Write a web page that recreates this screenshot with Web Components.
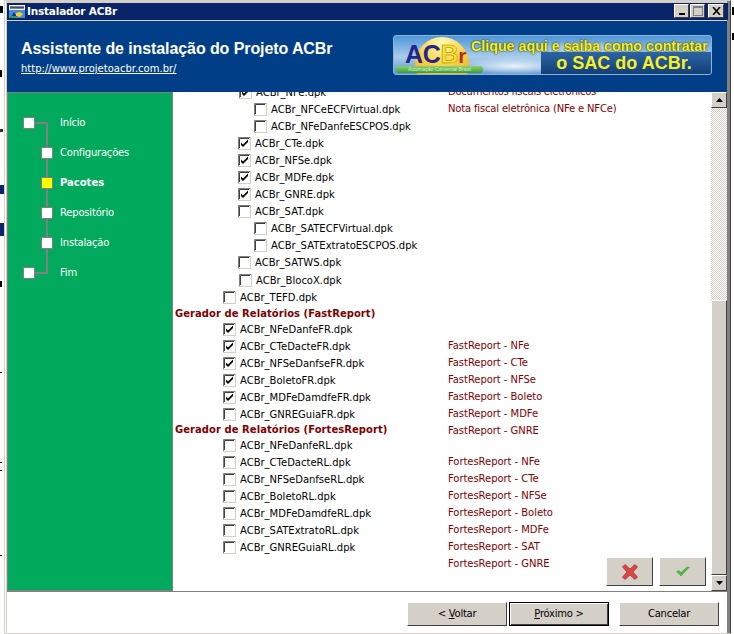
<!DOCTYPE html>
<html>
<head>
<meta charset="utf-8">
<title>Instalador ACBr</title>
<style>
  html, body { margin: 0; padding: 0; background: #fff; overflow: hidden; }
  body { width: 734px; height: 634px; font: 11px "DejaVu Sans", sans-serif; }
</style>
</head>
<body>
<wizard-window>
  <title-bar slot="title">Instalador ACBr</title-bar>
  <wizard-banner slot="banner"></wizard-banner>
  <step-list slot="steps"></step-list>
  <package-list slot="list"></package-list>
  <footer-bar slot="footer"></footer-bar>
</wizard-window>

<script>
const FONT = '"DejaVu Sans", "Liberation Sans", sans-serif'
const RAISED = 'background: #d4d0c8; border: 1px solid; border-color: #fff #404040 #404040 #fff;'

customElements.define('wizard-window', class extends HTMLElement {
  constructor () {
    super()
    // bits of the desktop that show around the window
    const marks = [
      [0, 6, 3, 7, '#000'], [0, 70, 2, 7, '#000'], [0, 129, 3, 3, '#333'], [0, 185, 4, 9, '#0a246a'],
      [0, 223, 4, 13, '#0a246a'], [0, 281, 2, 6, '#000'], [0, 372, 2, 1, '#000'], [0, 462, 2, 1, '#000'],
      [0, 470, 2, 1, '#000'], [0, 555, 2, 1, '#000'], [732, 7, 2, 8, '#000'], [732, 33, 2, 7, '#000']
    ].map(([x, y, w, h, c]) => `<i style="left:${x}px;top:${y}px;width:${w}px;height:${h}px;background:${c}"></i>`).join('')
    this.attachShadow({ mode: 'open' }).innerHTML = `
      <style>
        :host { display: block; width: 734px; height: 634px; background: #fff; position: relative; font-family: ${FONT}; }
        i { position: absolute; }
        #frame { box-sizing: border-box; margin: 0 3px 0 4px; height: 634px; background: #d4d0c8; border: 1px solid #d4d0c8; border-right-color: #404040; padding: 2px 3px 0 2px; display: flex; flex-direction: column; box-shadow: inset 1px 0 0 #fff, inset -3px 0 0 #808080; }
        #client { flex: 1; display: flex; flex-direction: column; background: #fff; min-height: 0; }
        #middle { height: 499px; flex: none; display: flex; min-height: 0; }
      </style>
      ${marks}
      <div id="frame">
        <slot name="title"></slot>
        <div id="client">
          <slot name="banner"></slot>
          <div id="middle">
            <slot name="steps"></slot>
            <slot name="list"></slot>
          </div>
          <slot name="footer"></slot>
        </div>
      </div>`
  }
})

customElements.define('title-bar', class extends HTMLElement {
  constructor () {
    super()
    this.attachShadow({ mode: 'open' }).innerHTML = `
      <style>
        :host { display: flex; align-items: center; height: 17px; margin: 0 -1px 1px 0; background: #0a246a; color: #fff; font: bold 10.5px/17px ${FONT}; letter-spacing: -.2px; }
        svg { margin: 0 2px; flex: none; }
        #name { flex: 1; }
        .btn { width: 15px; height: 14px; box-sizing: border-box; ${RAISED} display: flex; align-items: center; justify-content: center; }
        #buttons { display: flex; gap: 1px; margin: -2px 4px 0 0; }
        #buttons .btn:last-child { margin-left: 2px; width: 16px; }
      </style>
      <svg width="16" height="13" viewBox="0 0 16 13">
        <rect width="16" height="13" fill="#f4f4f4"/>
        <path d="M1 2h14M1 3h14" stroke="#101040"/>
        <rect x="0" y="5" width="16" height="8" fill="#3f8fd8"/>
        <path d="M2 12l3-5 3 5z" fill="#20308c"/>
        <path d="M7 8l4-1 3 2-3 3-4-1z" fill="#f0d020"/>
        <rect x="0" y="11" width="7" height="2" fill="#30a050"/>
      </svg>
      <span id="name"><slot></slot></span>
      <div id="buttons">
        <div class="btn"><svg style="margin:0" width="8" height="8"><rect x="1" y="6" width="6" height="2" fill="#000"/></svg></div>
        <div class="btn"><svg style="margin:0" width="10" height="10"><rect x=".5" y=".5" width="9" height="9" fill="none" stroke="#808080"/><rect width="10" height="2" fill="#808080"/></svg></div>
        <div class="btn"><svg style="margin:0" width="9" height="8" viewBox="0 0 9 8"><path d="M1 0l7 8M8 0l-7 8" stroke="#000" stroke-width="1.6" fill="none"/></svg></div>
      </div>`
  }
})

customElements.define('wizard-banner', class extends HTMLElement {
  constructor () {
    super()
    this.attachShadow({ mode: 'open' }).innerHTML = `
      <style>
        :host { display: flex; height: 71px; background: #003f87; color: #fff; box-sizing: border-box; padding: 14px 15px 0 14px; justify-content: space-between; flex: none; }
        #head { padding-top: 4px; }
        h1 { margin: 0; font: bold 16px/20px "Liberation Sans", sans-serif; letter-spacing: -.09px; }
        a { display: block; margin-top: 3px; color: #fff; font: 10px/13px ${FONT}; }
        #ad { position: relative; width: 319px; height: 40px; box-sizing: border-box; border-radius: 3px; overflow: hidden; border: 1px solid #8fb4d8;
          background: radial-gradient(ellipse 60px 9px at 120px 30px, #e8f2fa, transparent), radial-gradient(ellipse 50px 7px at 190px 12px, #cfe3f4, transparent), linear-gradient(#4f96d8, #a9cdea 55%, #5d94cc); }
        #sun { position: absolute; left: 21px; top: 1px; width: 54px; height: 54px; border-radius: 50%; background: radial-gradient(circle at 50% 10%, #fff8b8, #f8d040 45%, #e89020); }
        #logo { position: absolute; left: 11px; top: 6px; font: bold 25px/24px "Liberation Sans", sans-serif; color: #24248c; letter-spacing: -.3px; }
        #logo b { color: #f6e030; -webkit-text-stroke: .5px #a08000; }
        #logo span { color: #b03018; font-size: 21px; }
        #strip { position: absolute; left: 2px; top: 30px; width: 87px; height: 7px; border-radius: 3px; background: linear-gradient(#8cd070, #3c9c38); color: #d8f0d0; font: 5px/7px "Liberation Sans", sans-serif; text-align: center; }
        #l1 { position: absolute; left: 77px; top: 3px; font: bold 14.25px/14px "Liberation Sans", sans-serif; color: #f8f020; white-space: nowrap; text-shadow: 0 0 1px #2a3a10, 0 0 2px #2a3a10; }
        #panel { position: absolute; right: 0; bottom: 0; width: 170px; height: 22px; background: linear-gradient(#2c64a4, #123f78); }
        #l2 { font: bold 18px/23px "Liberation Sans", sans-serif; color: #f8f020; text-align: center; padding-right: 4px; }
      </style>
      <div id="head">
        <h1>Assistente de instalação do Projeto ACBr</h1>
        <a href="#">http://www.projetoacbr.com.br/</a>
      </div>
      <div id="ad">
        <div id="sun"></div>
        <div id="logo">AC<b>B</b><span>r</span></div>
        <div id="strip">Automação Comercial Brasil</div>
        <div id="l1">Clique aqui e saiba como contratar</div>
        <div id="panel"><div id="l2">o SAC do ACBr.</div></div>
      </div>`
  }
})

customElements.define('step-list', class extends HTMLElement {
  constructor () {
    super()
    const steps = [
      ['Início', 0], ['Configurações', 1], ['Pacotes', 1, true],
      ['Repositório', 1], ['Instalação', 1], ['Fim', 0]
    ]
    const rows = steps.map(([name, inner, current]) => `
      <div class="row">
        <i class="box ${inner ? 'in' : ''} ${current ? 'cur' : ''}"></i>
        <span class="${current ? 'cur' : ''}">${name}</span>
      </div>`).join('')
    this.attachShadow({ mode: 'open' }).innerHTML = `
      <style>
        :host { display: block; flex: none; width: 166px; box-sizing: border-box; background: #00a95c; border: 1px solid #808080; position: relative; color: #fff; font: 10px/30px ${FONT}; letter-spacing: -.2px; padding-top: 15px; }
        #line { position: absolute; left: 27px; top: 29px; width: 13px; height: 152px; box-sizing: border-box; border: 2px solid #808080; border-left: 0; }
        .row { height: 30px; position: relative; padding-left: 52px; }
        .box { position: absolute; left: 15px; top: 9px; background: #fff; border: 1px solid #808080; width: 10px; height: 10px; }
        .box.in { left: 33px; }
        .box.cur { background: #ffff00; }
        span.cur { font-weight: bold; letter-spacing: 0; }
      </style>
      <div id="line"></div>
      ${rows}`
  }
})

customElements.define('check-row', class extends HTMLElement {
  constructor () {
    super()
    const x = this.getAttribute('x') || 0
    const on = this.hasAttribute('on')
    this.attachShadow({ mode: 'open' }).innerHTML = `
      <style>
        :host { display: flex; align-items: center; height: 17px; white-space: nowrap; font: 10px/17px ${FONT}; color: #000; padding-left: ${x}px; }
        svg { flex: none; margin-right: 4px; }
      </style>
      <svg width="13" height="13" viewBox="0 0 13 13">
        <rect x=".5" y=".5" width="12" height="12" fill="#fff" stroke="#d4d0c8"/>
        <path d="M.5 12V.5H12" fill="none" stroke="#808080"/>
        <path d="M1.5 11V1.500H11" fill="none" stroke="#404040"/>
        ${on ? '<path d="M3 5.500l2 2 5-5v2.500l-5 5-2-2z" fill="#000"/>' : ''}
      </svg>
      <slot></slot>`
  }
})

customElements.define('section-head', class extends HTMLElement {
  constructor () {
    super()
    this.attachShadow({ mode: 'open' }).innerHTML = `
      <style>
        :host { display: block; height: 15px; padding-left: 2px; font: bold 10px/15px ${FONT}; letter-spacing: .05px; color: #800000; white-space: nowrap; }
      </style>
      <slot></slot>`
  }
})

customElements.define('package-list', class extends HTMLElement {
  constructor () {
    super()
    const rows = [
      ['ACBr_NFe.dpk', 66, 1],
      ['ACBr_NFCeECFVirtual.dpk', 81],
      ['ACBr_NFeDanfeESCPOS.dpk', 81],
      ['ACBr_CTe.dpk', 65, 1],
      ['ACBr_NFSe.dpk', 65, 1],
      ['ACBr_MDFe.dpk', 65, 1],
      ['ACBr_GNRE.dpk', 65, 1],
      ['ACBr_SAT.dpk', 65],
      ['ACBr_SATECFVirtual.dpk', 81],
      ['ACBr_SATExtratoESCPOS.dpk', 81],
      ['ACBr_SATWS.dpk', 65],
      ['ACBr_BlocoX.dpk', 66, 0, 'margin-top:1px'],
      ['ACBr_TEFD.dpk', 50],
      ['Gerador de Relatórios (FastReport)'],
      ['ACBr_NFeDanfeFR.dpk', 50, 1],
      ['ACBr_CTeDacteFR.dpk', 50, 1],
      ['ACBr_NFSeDanfseFR.dpk', 50, 1],
      ['ACBr_BoletoFR.dpk', 50, 1],
      ['ACBr_MDFeDamdfeFR.dpk', 50, 1],
      ['ACBr_GNREGuiaFR.dpk', 50],
      ['Gerador de Relatórios (FortesReport)', undefined, 0, 'height:14px;line-height:14px'],
      ['ACBr_NFeDanfeRL.dpk', 50],
      ['ACBr_CTeDacteRL.dpk', 50],
      ['ACBr_NFSeDanfseRL.dpk', 50],
      ['ACBr_BoletoRL.dpk', 50],
      ['ACBr_MDFeDamdfeRL.dpk', 50],
      ['ACBr_SATExtratoRL.dpk', 50],
      ['ACBr_GNREGuiaRL.dpk', 50]
    ]
    const blank = new Array(12).fill(['', 'height:17px'])
    const notes = [
      ['Documentos fiscais eletrônicos', 'letter-spacing:-.25px'],
      ['Nota fiscal eletrônica (NFe e NFCe)', 'letter-spacing:-.17px'],
      ...blank, ['', 'height:16px'],
      ['FastReport - NFe'], ['FastReport - CTe'], ['FastReport - NFSe'], ['FastReport - Boleto'], ['FastReport - MDFe'], ['FastReport - GNRE'], ['', 'height:14px'],
      ['FortesReport - NFe'], ['FortesReport - CTe'], ['FortesReport - NFSe'], ['FortesReport - Boleto'], ['FortesReport - MDFe'], ['FortesReport - SAT'], ['FortesReport - GNRE']
    ]
    const left = rows.map(([text, x, on, css]) => x === undefined
      ? `<section-head style="${css || ''}">${text}</section-head>`
      : `<check-row x="${x}" ${on ? 'on' : ''} style="${css || ''}">${text}</check-row>`).join('')
    const right = notes.map(([n, css]) => `<div class="note" style="${css || ''}">${n}</div>`).join('')
    this.attachShadow({ mode: 'open' }).innerHTML = `
      <style>
        :host { display: flex; flex: 1; min-width: 0; position: relative; background: #fff; overflow: hidden; }
        #view { flex: 1; position: relative; overflow: hidden; }
        #content { display: grid; grid-template-columns: 275px 1fr; margin-top: -8px; }
        #notes { margin-top: -1px; }
        .note { height: 17px; font: 10px/17px ${FONT}; letter-spacing: -.05px; color: #800000; white-space: nowrap; }
        #actions { position: absolute; right: 5px; bottom: 5px; display: flex; gap: 6px; }
        .tool { width: 47px; height: 29px; box-sizing: border-box; ${RAISED} display: flex; align-items: center; justify-content: center; }
        #bar { flex: none; width: 16px; display: flex; flex-direction: column; background: repeating-conic-gradient(#d4d0c8 0 25%, #fff 0 50%) 0 0 / 2px 2px; }
        .arrow { height: 16px; box-sizing: border-box; ${RAISED} display: flex; align-items: center; justify-content: center; flex: none; }
        #track { height: 192px; flex: none; }
        #thumb { flex: 1; ${RAISED} }
      </style>
      <div id="view">
        <div id="content">
          <div>${left}</div>
          <div id="notes">${right}</div>
        </div>
        <div id="actions">
          <div class="tool"><svg width="16" height="16" viewBox="0 0 16 16"><path d="M.5 3L3 .5l5 4.500 5-4.500L15.500 3 11 8l4.500 5-2.500 2.500-5-4.500-5 4.500L.5 13 5 8z" fill="#d84848" stroke="#a82828" stroke-width=".7"/></svg></div>
          <div class="tool"><svg width="14" height="11" viewBox="0 0 14 11"><path d="M.5 5.500l2.500-1 2 2L11 1l2.500 0L5 10z" fill="#4cb848" stroke="#2e8a30" stroke-width=".4"/></svg></div>
        </div>
      </div>
      <div id="bar">
        <div class="arrow"><svg width="7" height="4"><path d="M3.500 0L7 4H0z" fill="#000"/></svg></div>
        <div id="track"></div>
        <div id="thumb"></div>
        <div class="arrow"><svg width="7" height="4"><path d="M0 0h7L3.500 4z" fill="#000"/></svg></div>
      </div>`
  }
})

customElements.define('footer-bar', class extends HTMLElement {
  constructor () {
    super()
    this.attachShadow({ mode: 'open' }).innerHTML = `
      <style>
        :host { display: flex; flex: 1; box-sizing: border-box; border-top: 1px solid #808080; background: #fff; padding: 10px 8px 0 0; justify-content: flex-end; gap: 2px; font: 10px/22px ${FONT}; letter-spacing: -.25px; }
        .b { width: 100px; height: 24px; box-sizing: border-box; ${RAISED} text-align: center; color: #000; }
        .b.def { border-color: #000; box-shadow: inset 1px 1px 0 #fff, inset -1px -1px 0 #404040; }
        .b:last-child { margin-left: 8px; }
      </style>
      <div class="b">&lt; <u>V</u>oltar</div>
      <div class="b def"><u>P</u>róximo &gt;</div>
      <div class="b">Cancelar</div>`
  }
})
</script>
</body>
</html>
